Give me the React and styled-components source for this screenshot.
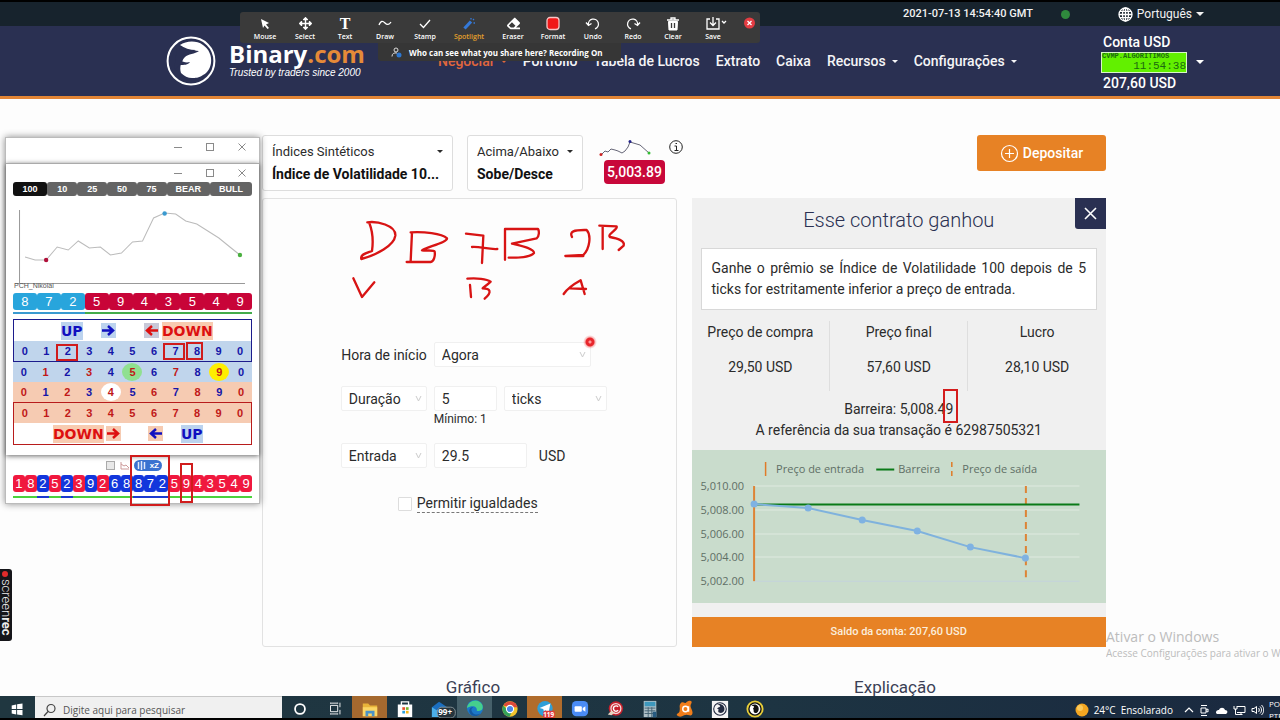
import React from "react";
import styled, { createGlobalStyle, css } from "styled-components";
import { FaArrowsAlt, FaEraser } from "react-icons/fa";

const GlobalStyle = createGlobalStyle`
  *, *::before, *::after { box-sizing: border-box; }
  body { margin: 0; background: #fff; color: #2b2b2b; font: 14px/20px Roboto, "Liberation Sans", sans-serif; }
  button, input, select { font: inherit; color: inherit; margin: 0; }
  a { color: inherit; text-decoration: none; }
`;

const ui = `"Open Sans", "Noto Sans", sans-serif`;

/* ---------- page shell ---------- */
const Desktop = styled.div`
  position: relative;
  display: flex;
  flex-direction: column;
  min-height: 100vh;
  overflow: hidden;
  border-top: 2px solid #000;
  background: #fdfdfd;
`;

const TopBar = styled.div`
  display: flex;
  align-items: center;
  justify-content: flex-end;
  height: 24px;
  padding-right: 76px;
  background: #17232d;
  color: #f2f2f2;
  font-size: 12px;
`;

const Clock = styled.time`
  font-size: 11px;
  font-weight: 500;
`;

const OnlineDot = styled.span`
  width: 9px;
  height: 9px;
  margin: 0 48px 0 28px;
  border-radius: 50%;
  background: #2f8a3d;
`;

const LanguageButton = styled.button`
  display: flex;
  align-items: center;
  gap: 4px;
  padding: 0;
  border: 0;
  background: none;
`;

const Caret = styled.span`
  display: inline-block;
  flex: none;
  border: ${(p) => p.$size || 4}px solid transparent;
  border-top-color: currentColor;
  border-bottom: 0;
`;

const Header = styled.header`
  display: flex;
  align-items: center;
  height: 73px;
  padding: 0 76px 0 166px;
  border-bottom: 3px solid #e38535;
  background: #2a3052;
  color: #fff;
`;

const Brand = styled.a`
  display: flex;
  align-items: center;
  gap: 13px;
  width: 200px;
`;

const BrandName = styled.strong`
  display: block;
  font: 700 24px/24px ${ui};
  span { color: #e58a38; }
`;

const Tagline = styled.em`
  display: block;
  font: italic 10px/14px "Liberation Sans", sans-serif;
  white-space: nowrap;
`;

const Nav = styled.nav`
  display: flex;
  gap: 16px;
  margin-left: 72px;
  white-space: nowrap;
`;

const NavLink = styled.a`
  display: flex;
  align-items: center;
  gap: 6px;
  font-weight: 500;
  color: ${(p) => (p.$active ? "#e0673c" : "#f5f5f7")};
`;

const Account = styled.div`
  display: flex;
  align-items: center;
  gap: 9px;
  margin-left: auto;
  padding-top: 2px;
  font-weight: 500;
`;

const AccountInfo = styled.div`
  width: 86px;
  div { padding-left: 2px; }
`;

const Lcd = styled.p`
  display: flex;
  flex-direction: column;
  height: 21px;
  margin: 0;
  border: 1px solid #d9f7c8;
  background: #62f000;
  color: #1b6a10;
  font: 700 7px/7px "Liberation Mono", monospace;
  span:last-child { align-self: flex-end; font-weight: 400; font-size: 11px; line-height: 12px; }
`;

/* ---------- main content ---------- */
const Main = styled.main`
  flex: 1;
  padding: 36px 174px 0 262px;
`;

const MarketBar = styled.div`
  display: flex;
  align-items: flex-start;
  height: 56px;
  margin-bottom: 7px;
`;

const MarketButton = styled.button`
  width: ${(p) => p.$width}px;
  height: 56px;
  margin-right: 14px;
  padding: 4px 9px;
  border: 1px solid #ddd;
  border-radius: 3px;
  background: #fff;
  text-align: left;
  line-height: 23px;
  white-space: nowrap;
`;

const MarketGroup = styled.span`
  display: flex;
  align-items: center;
  justify-content: space-between;
  font-size: 13px;
`;

const MarketName = styled.span`
  display: block;
  font-weight: 700;
  color: #111;
`;

const Quote = styled.div`
  display: flex;
  flex-direction: column;
  align-items: flex-end;
  gap: 3px;
  width: 68px;
  padding-top: 4px;
  svg { display: block; align-self: flex-start; margin-left: 2px; }
`;

const Price = styled.span`
  width: 61px;
  height: 24px;
  border-radius: 4px;
  background: #c8083a;
  color: #fff;
  font-weight: 500;
  line-height: 24px;
  text-align: center;
`;

const InfoLink = styled.a`
  width: 14px;
  height: 14px;
  margin: 5px 0 0 4px;
  svg { display: block; }
`;

const Deposit = styled.button`
  display: flex;
  align-items: center;
  justify-content: center;
  gap: 4px;
  width: 129px;
  height: 36px;
  margin-left: auto;
  border: 0;
  border-radius: 3px;
  background: #e78225;
  color: #fff;
  font-weight: 500;
`;

const Columns = styled.div`
  display: grid;
  grid-template-columns: 1fr 1fr;
  gap: 15px;
`;

const TradePanel = styled.form`
  padding: 143px 3px 0 0;
  border: 1px solid #e2e2e2;
  border-radius: 3px;
`;

const FormRow = styled.div`
  display: grid;
  grid-template-columns: 40% 1fr;
  align-items: center;
  column-gap: 7px;
  margin-bottom: ${(p) => p.$gap}px;
`;

const RowLabel = styled.div`
  display: flex;
  justify-content: flex-end;
`;

const RowFields = styled.div`
  display: flex;
  align-items: center;
  gap: 7px;
`;

const fieldBox = css`
  width: 100%;
  height: 25px;
  padding: 0 7px;
  border: 1px solid #f0f0f0;
  border-radius: 2px;
  background: #fff;
  outline: 0;
`;

const Select = styled.select`
  ${fieldBox}
  appearance: none;
`;

const Input = styled.input`
  ${fieldBox}
  width: ${(p) => p.$width}px;
`;

const SelectWrap = styled.span`
  position: relative;
  display: block;
  width: ${(p) => p.$width}px;
  svg { position: absolute; right: 5px; top: 9px; pointer-events: none; }
`;

const Hint = styled.small`
  display: block;
  grid-column: 2;
  font-size: 12px;
  line-height: 16px;
`;

const Currency = styled.span`
  padding-left: 5px;
`;

const Equal = styled.div`
  display: flex;
  align-items: center;
  justify-content: center;
  gap: 5px;
  input { appearance: none; width: 14px; height: 14px; border: 1px solid #ddd; border-radius: 1px; background: #fff; }
  label { border-bottom: 1px dashed #777; line-height: 17px; }
`;

const Contract = styled.section`
  display: flex;
  flex-direction: column;
  background: #f0f0f0;
`;

const ContractHead = styled.div`
  display: grid;
  grid-template-columns: 31px 1fr 31px;
  height: 50px;
`;

const ContractTitle = styled.h2`
  margin: 10px 0 0;
  grid-column: 2;
  font-weight: 300;
  font-size: 20px;
  line-height: 25px;
  text-align: center;
  color: #2a3052;
`;

const CloseButton = styled.button`
  display: grid;
  place-items: center;
  width: 31px;
  height: 31px;
  padding: 0;
  border: 0;
  border-radius: 0 0 0 3px;
  background: #2a3052;
`;

const Description = styled.p`
  margin: 0 9px 11px;
  padding: 9px 10px;
  border: 1px solid #d8d8d8;
  background: #fff;
  line-height: 21px;
  text-align: justify;
`;

const Prices = styled.table`
  width: 100%;
  border-collapse: collapse;
  table-layout: fixed;
  text-align: center;
  th, td { padding: 0; font-weight: 400; }
  th + th, td + td { border-left: 1px solid #dedede; }
  th { height: 22px; }
  td { height: 48px; }
`;

const ContractNotes = styled.div`
  padding: 8px 0 9px;
  line-height: 21px;
  text-align: center;
`;

const Marked = styled.span`
  position: relative;
  &::after {
    content: "";
    position: absolute;
    inset: -12px -5px -6px -2px;
    border: 2px solid #d41c1c;
  }
`;

const ContractChart = styled.svg`
  display: block;
  width: 100%;
  background: #c9dccc;
  text { font: 11px ${ui}; fill: #5f6f66; }
`;

const Balance = styled.div`
  margin-top: 14px;
  background: #e78225;
  color: #fbeedd;
  font-size: 11px;
  font-weight: 500;
  line-height: 30px;
  text-align: center;
`;

const Sections = styled.div`
  display: grid;
  grid-template-columns: 1fr 1fr;
  margin-top: 31px;
  h3 { margin: 0; font-weight: 400; font-size: 17px; line-height: 18px; text-align: center; color: #3b3f55; }
`;

/* ---------- indicator windows lying over the page ---------- */
const Windows = styled.aside`
  position: absolute;
  left: 5px;
  top: 135px;
  width: 255px;
  padding-top: 25px;
  border: 1px solid #bbb;
  background: #fff;
  box-shadow: 0 0 7px rgba(0, 0, 0, 0.45);
  font: 10px/12px "Liberation Sans", sans-serif;
`;

const InnerWindow = styled.section`
  padding: 0 7px 10px;
  border-top: 1px solid #aaa;
  background: #fff;
  box-shadow: 0 1px 5px rgba(0, 0, 0, 0.6);
`;

const WindowButtons = styled.div`
  display: flex;
  justify-content: flex-end;
  align-items: center;
  gap: 24px;
  height: 18px;
  padding-right: 6px;
  svg { display: block; }
`;

const OuterButtons = styled(WindowButtons)`
  position: absolute;
  top: 0;
  right: 7px;
`;

const Tabs = styled.div`
  display: grid;
  grid-template-columns: 34fr 30fr 30fr 29fr 30fr 43fr 42fr;
`;

const Tab = styled.button`
  height: 14px;
  padding: 0;
  border: 0;
  border-radius: 3px;
  background: ${(p) => (p.$active ? "#111" : "#646464")};
  color: #fff;
  font: 700 9px/14px "Liberation Sans", sans-serif;
`;

const MiniChart = styled.svg`
  display: block;
  width: 100%;
  height: 97px;
  text { font: 7px "Liberation Sans", sans-serif; fill: #555; }
`;

const Ticks = styled.ol`
  display: flex;
  margin: 0;
  padding: 0;
  list-style: none;
`;

const Tick = styled.li`
  flex: 1;
  color: #fff;
  font-size: 13px;
  line-height: 17px;
  text-align: center;
  span { display: block; border-radius: 3px; background: ${(p) => p.$color}; }
  &::after { content: ""; display: block; height: 2px; margin-top: ${(p) => p.$gap}px; background: ${(p) => p.$line}; }
`;

const Board = styled.div`
  margin-top: 5px;
`;

const BoardBox = styled.div`
  border: 1px solid ${(p) => p.$color};
`;

const Banner = styled.div`
  display: grid;
  grid-template-columns: ${(p) => p.$columns};
  justify-content: start;
  align-items: center;
  height: 21px;
  padding-left: ${(p) => p.$indent}px;
`;

const Word = styled.strong`
  background: ${(p) => (p.$up ? "#bcd3ee" : "#f8cbb0")};
  color: ${(p) => (p.$up ? "#1010c0" : "#dd1010")};
  font: 700 14px/18px "DejaVu Sans", sans-serif;
`;

const ArrowBox = styled.span`
  display: grid;
  place-items: center;
  height: 15px;
  background: ${(p) => p.$bg};
`;

const DigitTable = styled.table`
  width: 100%;
  border-collapse: collapse;
  table-layout: fixed;
`;

const DigitRow = styled.tr`
  background: ${(p) => p.$bg};
`;

const Digit = styled.td`
  height: 20px;
  padding: 0;
  color: ${(p) => (p.$red ? "#c01818" : "#1515a8")};
  font-weight: 700;
  font-size: 11px;
  text-align: center;
  span { display: block; width: 20px; margin: 0 auto; border-radius: 50%; line-height: 18px; background: ${(p) => p.$mark || "none"}; }
`;

const Controls = styled.div`
  display: flex;
  align-items: center;
  gap: 5px;
  height: 20px;
  padding-left: 100px;
  input { appearance: none; width: 9px; height: 9px; border: 1px solid #aaa; background: #e8e8e8; }
`;

const Toggle = styled.button`
  display: flex;
  align-items: center;
  justify-content: space-between;
  width: 28px;
  height: 11px;
  padding: 0 3px;
  border: 0;
  border-radius: 6px;
  background: #3a72d0;
  color: #fff;
  font: 700 8px/11px "Liberation Sans", sans-serif;
`;

const LongTicks = styled.div`
  padding: 0 7px 5px;
`;

/* ---------- annotations ---------- */
const Marker = styled.span`
  position: absolute;
  left: ${(p) => p.$x}px;
  top: ${(p) => p.$y}px;
  width: ${(p) => p.$w}px;
  height: ${(p) => p.$h}px;
  border: 2px solid #d01c1c;
`;

const Ink = styled.svg`
  position: absolute;
  left: 350px;
  top: 216px;
  width: 280px;
  height: 84px;
  pointer-events: none;
`;

const Spot = styled.span`
  position: absolute;
  left: 583px;
  top: 333px;
  width: 14px;
  height: 14px;
  border-radius: 50%;
  background: radial-gradient(circle, #ff9a9a 0 1px, #e8262c 2px 4px, rgba(240, 60, 60, 0.35) 5px, transparent 7px);
`;

const ShareTools = styled.div`
  position: absolute;
  left: 240px;
  top: 10px;
  width: 520px;
  color: #fff;
  font: 600 7px/9px ${ui};
`;

const ToolRow = styled.div`
  display: flex;
  height: 31px;
  padding-left: 5px;
  border-radius: 3px;
  background: #3a3a3a;
`;

const Tool = styled.button`
  display: flex;
  flex: none;
  flex-direction: column;
  align-items: center;
  gap: 1px;
  width: ${(p) => p.$width || 40}px;
  padding: 4px 0 0;
  border: 0;
  background: none;
  color: ${(p) => (p.$active ? "#e5a02c" : "#fff")};
  b { height: 15px; font: 700 16px/15px "Liberation Serif", serif; }
  svg { display: block; height: 15px; }
`;

const CloseTool = styled(Tool)`
  width: 32px;
  margin-right: -5px;
  padding-top: 3px;
`;

const ShareNote = styled.div`
  display: flex;
  align-items: center;
  gap: 7px;
  width: 243px;
  height: 18px;
  margin-left: 138px;
  padding-left: 13px;
  border-radius: 0 0 3px 3px;
  background: #363636;
  font-size: 8px;
  font-weight: 700;
  white-space: nowrap;
`;

const RecTag = styled.div`
  position: absolute;
  left: 0;
  top: 567px;
  width: 12px;
  height: 72px;
  padding-top: 2px;
  border-radius: 0 3px 3px 0;
  background: #16161a;
  color: #eee;
  writing-mode: vertical-rl;
  font: 300 13px/11px Roboto, sans-serif;
  white-space: nowrap;
  b { font-weight: 700; }
  &::before { content: ""; display: inline-block; width: 6px; height: 6px; margin: 0 3px 2px 0; border-radius: 50%; background: #e02b2b; }
`;

const Watermark = styled.div`
  position: absolute;
  right: 0;
  bottom: 60px;
  width: 174px;
  overflow: hidden;
  color: #bcbcbc;
  font: 10px/14px ${ui};
  white-space: nowrap;
  strong { display: block; font-weight: 400; font-size: 14px; line-height: 18px; }
`;

/* ---------- taskbar ---------- */
const Taskbar = styled.footer`
  position: relative;
  display: flex;
  height: 24px;
  border-bottom: 2px solid #000;
  background: linear-gradient(90deg, #203740, #1d3442 60%, #1a2940);
  color: #fff;
  font: 10px/22px ${ui};
  overflow: hidden;
`;

const TaskButton = styled.button`
  display: flex;
  flex: none;
  justify-content: center;
  width: 35px;
  padding: 4px 0 0;
  border: 0;
  background: ${(p) => p.$bg || "none"};
  svg { display: block; flex: none; width: 18px; height: 18px; overflow: visible; }
  text { font: 700 9px ${ui}; fill: #fff; }
`;

const Search = styled.label`
  display: flex;
  align-items: center;
  gap: 7px;
  flex: none;
  width: 247px;
  padding: 5px 0 0 8px;
  border-top: 1px solid #c8c8c8;
  background: #f0f0f0;
  input { flex: 1; min-width: 0; padding: 0; border: 0; background: none; outline: 0; line-height: 16px; }
  input::placeholder { color: #555; opacity: 1; }
`;

const Tray = styled.div`
  display: flex;
  align-items: center;
  gap: 5px;
  margin-left: auto;
  height: 22px;
  padding-top: 6px;
  white-space: nowrap;
  svg { display: block; flex: none; }
`;

const Locale = styled.span`
  width: 11px;
  overflow: hidden;
  font-size: 8px;
  line-height: 12px;
  white-space: normal;
`;

/* ---------- drawings ---------- */
const Eagle = ({ size }) => (
  <svg width={size} height={size} viewBox="0 0 50 50">
    <circle cx="25" cy="25" r="23.400" fill="#2a3052" stroke="#fff" strokeWidth="2" />
    <path d="M14 9C20 5 30 4 37 9c6 4 9 11 8 18-1 6-4 10-8 12-4 3-8 3-11 3-4 0-8-2-11-5-1-3-1-6 0-9l3-8 12-6c-6 0-12-2-16-5z" fill="#fff" />
    <path d="M11 12c7 3 15 2 22 3-4 3-11 3-14 6-2 2-3 4-4 7l-7 6z" fill="#2a3052" />
    <path d="M14 24c3 2 6 3 10 2-2 3-6 3-10 3z" fill="#2a3052" />
  </svg>
);

const VIcon = () => (
  <svg width="7" height="7" viewBox="0 0 7 7" fill="none" stroke="#ccc">
    <path d="M1 1l2.500 5L6 1" />
  </svg>
);

const WinIcons = () => (
  <>
    <svg width="8" height="8" stroke="#8a8a8a"><path d="M0 4.500h8" /></svg>
    <svg width="8" height="8" fill="none" stroke="#8a8a8a"><rect x=".5" y=".5" width="7" height="7" /></svg>
    <svg width="8" height="8" stroke="#8a8a8a"><path d="M.5.5l7 7M7.500 .5l-7 7" /></svg>
  </>
);

const Arrow = ({ left, color }) => (
  <svg width="13" height="11" viewBox="0 0 13 11" fill="none" stroke={color} strokeWidth="2.500">
    <path d={left ? "M13 5.500H2M7 1L2 5.500 7 10" : "M0 5.500h11M6 1l5 4.500L6 10"} />
  </svg>
);

const shape = { width: 16, height: 15, viewBox: "0 0 16 15", fill: "none", stroke: "#fff", strokeWidth: 1.3 };

const toolItems = [
  { name: "Mouse", icon: <svg {...shape}><path d="M4 3l8 4-3 1.500 3 3.500-1.500 1-3-3.500L6 12z" fill="#fff" stroke="none" /></svg> },
  { name: "Select", icon: <FaArrowsAlt size={13} /> },
  { name: "Text", icon: <b>T</b> },
  { name: "Draw", icon: <svg {...shape}><path d="M2 9c2-5 4-4 6-2s4 2 6-1" /></svg> },
  { name: "Stamp", icon: <svg {...shape}><path d="M3 8l3.500 3.500L13 4" /></svg> },
  {
    name: "Spotlight",
    width: 48,
    active: true,
    icon: <svg {...shape} stroke="#3479d8"><path d="M3.500 12.500l6.500-7" strokeWidth="3.200" /><path d="M10 2v1.500M13 3l-1 1M14 7h-1.500" /></svg>,
  },
  { name: "Eraser", icon: <FaEraser size={13} /> },
  { name: "Format", icon: <svg {...shape}><rect x="2" y="1.500" width="12" height="12" rx="3" fill="#f01818" stroke="#f6c5c5" /></svg> },
  { name: "Undo", icon: <svg {...shape}><path d="M3.500 9A5 5 0 1 1 10 12.800M1 6.500l2.500 3 3-2" /></svg> },
  { name: "Redo", icon: <svg {...shape}><path d="M12.500 9A5 5 0 1 0 6 12.800M15 6.500l-2.500 3-3-2" /></svg> },
  { name: "Clear", icon: <svg {...shape}><path d="M2 4h12M6 4V2h4v2" /><path d="M3.500 5.500h9L12 14H4z" fill="#fff" strokeWidth="1" /><path d="M6.500 7v5M9.500 7v5" stroke="#3a3a3a" /></svg> },
  { name: "Save", icon: <svg {...shape} width={28} viewBox="-6 0 28 15"><path d="M5 3H2v10h12V3h-3M8 1v8M5 6.500L8 9.500l3-3M17 5l2 2 2-2" /></svg> },
];

const navItems = [
  ["Negociar", true, true],
  ["Portfólio"],
  ["Tabela de Lucros"],
  ["Extrato"],
  ["Caixa"],
  ["Recursos", true],
  ["Configurações", true],
];

const chartPoints = [[62, 54], [116, 58], [170, 70], [225, 81], [278, 97], [333, 108]];
const chartLevels = [["5,010.00", 36], ["5,008.00", 60], ["5,006.00", 84], ["5,004.00", 107], ["5,002.00", 131]];
const lastTicks = [8, 7, 2, 5, 9, 4, 3, 5, 4, 9];
const longTicks = "18252392688725943549".split("");
const blueTicks = [2, 4, 6, 8, 9, 10, 11, 12];
const blueLines = [2, 4, 10, 11, 12];
const digits = [0, 1, 2, 3, 4, 5, 6, 7, 8, 9, 0];

const Digits = ({ bg, isRed, marks = {} }) => (
  <DigitRow $bg={bg}>
    {digits.map((d, i) => (
      <Digit key={i} $red={isRed(i)} $mark={marks[i]}><span>{d}</span></Digit>
    ))}
  </DigitRow>
);

const taskIcons = [
  { name: "Cortana", art: <circle cx="10" cy="10" r="5.500" fill="none" stroke="#fff" strokeWidth="2" /> },
  { name: "Visão de tarefas", art: <path d="M5 6h8v7H5zM5 4V3m8 1V3M5 16v-1m8 1v-1M5 3.500h8M5 15.500h8M15.500 3v5m0 3v5" fill="none" stroke="#fff" /> },
  { name: "Explorador", bg: "#a5692f", art: <><path d="M2 4h6l2 2h8v12H2z" fill="#e9b43a" /><path d="M2 8h16v10H2z" fill="#fbd665" /><path d="M5 18v-6h10v6h-3v-3H8v3z" fill="#4a92c8" /></> },
  { name: "Loja", art: <><path d="M6 6V2h8v4" fill="none" stroke="#fff" strokeWidth="1.500" /><path d="M2 5h16v14H2z" fill="#fff" /><path d="M7 8h3v3H7z" fill="#e8502c" /><path d="M11 8h3v3h-3z" fill="#7db52c" /><path d="M7 12h3v3H7z" fill="#2ba0e0" /><path d="M11 12h3v3h-3z" fill="#f3b71c" /></> },
  { name: "Email", art: <><path d="M1 8l8-6 9 6v11H1z" fill="#1b6fc0" /><path d="M1 8l8 5 9-5v11H1z" fill="#4bb0ea" /><rect x="7" y="8" width="20" height="12" rx="5" fill="#26343c" stroke="#8a979c" /><text x="8" y="17">99+</text></> },
  { name: "Edge", bg: "#46606a", art: <><circle cx="10" cy="9" r="9" fill="#1c78c8" /><path d="M1 9C2 1 13-3 18 5c2 5-1 8-6 7 1-5-5-7-11-3z" fill="#45cf8d" /><path d="M6 10c0 5 5 8 10 5-3 4-10 4-12-1-1-4 1-6 4-6z" fill="#1458a0" /></> },
  { name: "Chrome", art: <><circle cx="10" cy="10" r="8.500" fill="#f2c42e" /><path d="M2.600 6A8.500 8.500 0 0 1 18.300 8H10z" fill="#dd4a3a" /><path d="M2.600 6a8.500 8.500 0 0 0 7 12.500l2.500-6L8 12z" fill="#34a25a" /><circle cx="10" cy="10" r="4" fill="#4a86e8" stroke="#fff" strokeWidth="1.200" /></> },
  { name: "Telegram", bg: "#b06c2c", art: <><circle cx="10" cy="9.500" r="8.500" fill="#2f9fd8" /><path d="M4 9L16 4l-2 10-4-3-1 2-1-3z" fill="#fff" /><rect x="8" y="12" width="13" height="8" rx="2" fill="#e03a3a" /><text x="8" y="19" style={{ fontSize: 7 }}>119</text></> },
  { name: "Zoom", art: <><rect x="1" y="1" width="18" height="17" rx="5" fill="#4a8cf5" /><rect x="4" y="7" width="8" height="6" rx="1" fill="#fff" /><path d="M13 9l3-2v6l-3-2z" fill="#fff" /></> },
  { name: "CCleaner", art: <><circle cx="11" cy="9.500" r="8" fill="#c5202c" /><circle cx="11" cy="9.500" r="5.500" fill="none" stroke="#f5d5d5" strokeWidth="1.500" /><path d="M13.500 7.500a3 3 0 1 0 0 4" fill="none" stroke="#fff" strokeWidth="1.600" /><path d="M2 16l4-4 4 2-4 3z" fill="#e6d3c0" /></> },
  { name: "Calculadora", art: <><path d="M3 1h14v18H3z" fill="#aebfc6" /><path d="M4 2h12v5H4z" fill="#3d97bc" /><path d="M4 9h12M4 12h12M4 15h12M8 8v11M12 8v11" stroke="#426070" /><path d="M13 13h4v6h-4z" fill="#275a80" /></> },
  { name: "Avast", art: <><path d="M5 4c2-3 4 0 6-1 3-3 8-3 6 1-2 3 0 5 1 8s0 6-3 5-4-1-6 0c-3 2-6 2-8 0-1-2 3-2 3-5 1-3-1-5 1-8z" fill="#f07d1a" /><circle cx="10.500" cy="10" r="3" fill="none" stroke="#fff" strokeWidth="1.600" /><path d="M14 7v6" stroke="#fff" strokeWidth="1.500" /></> },
];

export default function App() {
  return (
    <Desktop>
      <GlobalStyle />
      <TopBar>
        <Clock>2021-07-13 14:54:40 GMT</Clock>
        <OnlineDot />
        <LanguageButton>
          <svg width="15" height="15" viewBox="0 0 15 15" fill="none" stroke="#fff" strokeWidth="1.300">
            <circle cx="7.500" cy="7.500" r="6.500" />
            <ellipse cx="7.500" cy="7.500" rx="3" ry="6.500" />
            <path d="M1 7.500h13M7.500 1v13M2 4.300h11M2 10.700h11" />
          </svg>
          Português
          <Caret />
        </LanguageButton>
      </TopBar>

      <Header>
        <Brand href="#home">
          <Eagle size={50} />
          <span>
            <BrandName>Binary<span>.com</span></BrandName>
            <Tagline>Trusted by traders since 2000</Tagline>
          </span>
        </Brand>
        <Nav>
          {navItems.map(([label, menu, active]) => (
            <NavLink key={label} href="#nav" $active={active}>
              {label}
              {menu && <Caret $size={3} />}
            </NavLink>
          ))}
        </Nav>
        <Account>
          <AccountInfo>
            <div>Conta USD</div>
            <Lcd><span>CVMP.ALGORITIMOS</span><span>11:54:38</span></Lcd>
            <div>207,60 USD</div>
          </AccountInfo>
          <Caret />
        </Account>
      </Header>

      <Main>
        <MarketBar>
          <MarketButton $width={191}>
            <MarketGroup>Índices Sintéticos <Caret $size={3} /></MarketGroup>
            <MarketName>Índice de Volatilidade 10...</MarketName>
          </MarketButton>
          <MarketButton $width={116}>
            <MarketGroup>Acima/Abaixo <Caret $size={3} /></MarketGroup>
            <MarketName>Sobe/Desce</MarketName>
          </MarketButton>
          <Quote>
            <svg width="52" height="18" viewBox="0 0 52 18" fill="none">
              <path d="M2 16l4-4 3 1 3-3 4 1 3 1 4 2 3-2 3-4 2-5 10 3 9 8" stroke="#667" />
              <circle cx="2" cy="15.500" r="1.500" fill="#c22" />
              <circle cx="31" cy="2.500" r="1.500" fill="#228" />
              <circle cx="50" cy="14" r="1.500" fill="#3b3" />
            </svg>
            <Price>5,003.89</Price>
          </Quote>
          <InfoLink href="#info" aria-label="Informações">
            <svg width="14" height="14" fill="none" stroke="#222">
              <circle cx="7" cy="7" r="6.300" />
              <path d="M5.500 6h2v4.500M5.500 10.500h4M6.500 3.500h1.500" />
            </svg>
          </InfoLink>
          <Deposit>
            <svg width="19" height="19" fill="none" stroke="#fff" strokeWidth="1.200">
              <circle cx="9.500" cy="9.500" r="8" />
              <path d="M5 9.500h9M9.500 5v9" />
            </svg>
            Depositar
          </Deposit>
        </MarketBar>

        <Columns>
          <TradePanel>
            <FormRow $gap={19}>
              <RowLabel><label htmlFor="start">Hora de início</label></RowLabel>
              <RowFields>
                <SelectWrap $width={157}>
                  <Select id="start"><option>Agora</option></Select>
                  <VIcon />
                </SelectWrap>
              </RowFields>
            </FormRow>
            <FormRow $gap={16}>
              <RowLabel>
                <SelectWrap $width={86}>
                  <Select aria-label="Tipo de prazo"><option>Duração</option></Select>
                  <VIcon />
                </SelectWrap>
              </RowLabel>
              <RowFields>
                <Input $width={63} aria-label="Duração" defaultValue="5" />
                <SelectWrap $width={103}>
                  <Select aria-label="Unidade"><option>ticks</option></Select>
                  <VIcon />
                </SelectWrap>
              </RowFields>
              <Hint>Mínimo: 1</Hint>
            </FormRow>
            <FormRow $gap={27}>
              <RowLabel>
                <SelectWrap $width={86}>
                  <Select aria-label="Tipo de valor"><option>Entrada</option></Select>
                  <VIcon />
                </SelectWrap>
              </RowLabel>
              <RowFields>
                <Input $width={93} aria-label="Valor" defaultValue="29.5" />
                <Currency>USD</Currency>
              </RowFields>
            </FormRow>
            <Equal>
              <input type="checkbox" id="equal" />
              <label htmlFor="equal">Permitir igualdades</label>
            </Equal>
          </TradePanel>

          <Contract>
            <ContractHead>
              <ContractTitle>Esse contrato ganhou</ContractTitle>
              <CloseButton aria-label="Fechar">
                <svg width="13" height="13" stroke="#fff" strokeWidth="1.600"><path d="M1 1l11 11M12 1L1 12" /></svg>
              </CloseButton>
            </ContractHead>
            <Description>
              Ganhe o prêmio se Índice de Volatilidade 100 depois de 5 ticks for estritamente inferior a preço de entrada.
            </Description>
            <Prices>
              <thead>
                <tr><th>Preço de compra</th><th>Preço final</th><th>Lucro</th></tr>
              </thead>
              <tbody>
                <tr><td>29,50 USD</td><td>57,60 USD</td><td>28,10 USD</td></tr>
              </tbody>
            </Prices>
            <ContractNotes>
              <div>Barreira: 5,008.4<Marked>9</Marked></div>
              <div>A referência da sua transação é 62987505321</div>
            </ContractNotes>
            <ContractChart viewBox="0 0 414 153">
              {chartLevels.map(([label, y]) => (
                <React.Fragment key={label}>
                  <path d={`M62 ${y}H387`} stroke={y > 130 ? "#c3d3dc" : "#dfe9e0"} />
                  <text x="52" y={y + 4} textAnchor="end">{label}</text>
                </React.Fragment>
              ))}
              <path d="M73.500 12v14" stroke="#e07b28" strokeWidth="1.500" />
              <text x="84" y="23">Preço de entrada</text>
              <path d="M184 19.500h18" stroke="#0a7a18" strokeWidth="2" />
              <text x="206" y="23">Barreira</text>
              <path d="M259.500 12v14" stroke="#e07b28" strokeWidth="1.500" strokeDasharray="5 4" />
              <text x="270" y="23">Preço de saída</text>
              <path d="M62 36v95" stroke="#dd8436" strokeWidth="2" />
              <path d="M333.500 36v95" stroke="#dd8436" strokeWidth="2" strokeDasharray="7 5" />
              <path d="M62 54.500h325" stroke="#0a7a18" strokeWidth="2" />
              <polyline points={chartPoints.join(" ")} fill="none" stroke="#7fb2dd" strokeWidth="2" />
              {chartPoints.map(([x, y]) => <circle key={x} cx={x} cy={y} r="3.500" fill="#7fb2e2" />)}
            </ContractChart>
            <Balance>Saldo da conta: 207,60 USD</Balance>
          </Contract>
        </Columns>

        <Sections>
          <h3>Gráfico</h3>
          <h3>Explicação</h3>
        </Sections>
      </Main>

      <Taskbar>
        <TaskButton aria-label="Iniciar">
          <svg viewBox="0 0 20 20"><path d="M3 6l5-1v5H3zM9 4.800L15 4v6H9zM3 11h5v5l-5-1zM9 11h6v6l-6-1z" fill="#fff" /></svg>
        </TaskButton>
        <Search>
          <svg width="13" height="14" fill="none" stroke="#444" strokeWidth="1.200">
            <circle cx="8" cy="5.500" r="4" />
            <path d="M5 8.500L1 13" />
          </svg>
          <input type="text" placeholder="Digite aqui para pesquisar" />
        </Search>
        {taskIcons.map((t) => (
          <TaskButton key={t.name} aria-label={t.name} $bg={t.bg}>
            <svg viewBox="0 0 20 20">{t.art}</svg>
          </TaskButton>
        ))}
        <TaskButton aria-label="Binary">
          <svg viewBox="0 0 20 20"><path d="M1 1h18v19H1z" fill="#f4f4f4" /><circle cx="10" cy="10" r="7" fill="none" stroke="#222a40" strokeWidth="1.200" /><path d="M6 5c5-2 9 1 9 5s-4 5-6 4 0-4-1-4-2-1 1-2 0-3-3-3z" fill="#222a40" /></svg>
        </TaskButton>
        <TaskButton aria-label="Binary Bot">
          <svg viewBox="0 0 20 20"><circle cx="10" cy="10" r="8.500" fill="#111" stroke="#e8cf3a" strokeWidth="2" /><circle cx="10" cy="10" r="6" fill="#fff" /><path d="M6 6c5-3 9 1 8 5s-4 4-5 3 0-3-1-4 4-3-2-4z" fill="#111" /></svg>
        </TaskButton>
        <Tray>
          <svg width="14" height="14"><circle cx="7" cy="7" r="6.500" fill="#f4a722" /><circle cx="5" cy="5" r="3" fill="#fbc95a" /></svg>
          <span>24°C</span>
          <span>Ensolarado</span>
          <svg width="16" height="12" fill="none" stroke="#fff" strokeWidth="1.200"><path d="M7 8l4-4 4 4" /></svg>
          <svg width="11" height="12" fill="none" stroke="#fff"><path d="M2 4h5v5H2zM7 6l2-1v3L7 7M2 1.500h6M2 11.500h6" /></svg>
          <svg width="13" height="12"><path d="M1 9c0-3 2-3 3-3 1-3 5-3 6 0 3 0 3 3 1 4H2z" fill="#fff" /></svg>
          <svg width="13" height="12" fill="none" stroke="#fff"><path d="M4 2.500h8v6H4M1 2v3h3V2M2.500 5v5.500h7M8 8.500v2" /></svg>
          <svg width="13" height="12" fill="none" stroke="#fff"><path d="M1 4.500h2l2.500-2v7L3 7.500H1zM7.500 4c1 1 1 3 0 4M9 2.500c2 2 2 5 0 7M10.500 1c3 3 3 7 0 10" /></svg>
          <Locale>POR PTB</Locale>
        </Tray>
      </Taskbar>

      <Windows>
        <OuterButtons><WinIcons /></OuterButtons>
        <InnerWindow>
          <WindowButtons><WinIcons /></WindowButtons>
          <Tabs>
            {["100", "10", "25", "50", "75", "BEAR", "BULL"].map((t, i) => (
              <Tab key={t} $active={i === 0}>{t}</Tab>
            ))}
          </Tabs>
          <MiniChart viewBox="13 196 238 97" preserveAspectRatio="none">
            <path d="M19.500 210v74M15 283.500h229" stroke="#999" />
            <polyline
              points="25,257 35,260 46,260 57,247 68,250 78,241 89,248 100,247 110,255 121,253 132,242 142,241 153,218 164,213 175,214 185,221 196,224 207,231 218,238 229,247 239,255"
              fill="none"
              stroke="#bbb"
            />
            <circle cx="46" cy="260" r="2.200" fill="#b0103a" />
            <circle cx="164" cy="213.500" r="2.200" fill="#3a9ad0" />
            <circle cx="239" cy="255" r="2.200" fill="#4ab040" />
            <text x="14" y="288">PCH_Nikolai</text>
          </MiniChart>
          <Ticks>
            {lastTicks.map((d, i) => (
              <Tick key={i} $gap={2} $color={i < 3 ? "#28a5dc" : "#c80438"} $line={i < 3 ? "#3a9ad0" : "#43ab4b"}>
                <span>{d}</span>
              </Tick>
            ))}
          </Ticks>
          <Board>
            <BoardBox $color="#1c1c8c">
              <Banner $columns="22px 18px 15px 28px 15px 3px 51px" $indent={47}>
                <Word $up>UP</Word><i />
                <ArrowBox $bg="#bcd3ee"><Arrow color="#1010c0" /></ArrowBox><i />
                <ArrowBox $bg="#c8c8d8"><Arrow left color="#dd1010" /></ArrowBox><i />
                <Word>DOWN</Word>
              </Banner>
              <DigitTable><tbody><Digits bg="#c0d5ec" isRed={() => false} /></tbody></DigitTable>
            </BoardBox>
            <DigitTable>
              <tbody>
                <Digits bg="#c0d5ec" isRed={(i) => i % 2 === 1} marks={{ 5: "#90e090", 9: "#ffee00" }} />
                <Digits bg="#f6cbb2" isRed={(i) => i % 2 === 0} marks={{ 4: "#fff" }} />
              </tbody>
            </DigitTable>
            <BoardBox $color="#b81c1c">
              <DigitTable><tbody><Digits bg="#f6cbb2" isRed={() => true} /></tbody></DigitTable>
              <Banner $columns="51px 2px 15px 27px 15px 18px 22px" $indent={39}>
                <Word>DOWN</Word><i />
                <ArrowBox $bg="#f6cbb2"><Arrow color="#dd1010" /></ArrowBox><i />
                <ArrowBox $bg="#f6cbb2"><Arrow left color="#1010c0" /></ArrowBox><i />
                <Word $up>UP</Word>
              </Banner>
            </BoardBox>
          </Board>
        </InnerWindow>
        <Controls>
          <input type="checkbox" aria-label="Ativar sequência" />
          <svg width="9" height="9" fill="none" stroke="#c99"><path d="M1 1v7h8M1 3l3 2 2-1 3 3" /></svg>
          <Toggle>
            <svg width="9" height="9" stroke="#dfe8fa" strokeWidth="1.500"><path d="M1.500 1v7M4.500 0v9M7.500 1v7" /></svg>
            xZ
          </Toggle>
        </Controls>
        <LongTicks>
          <Ticks>
            {longTicks.map((d, i) => (
              <Tick
                key={i}
                $gap={4}
                $color={blueTicks.includes(i) ? "#1236dc" : "#f0183e"}
                $line={blueLines.includes(i) ? "#1a3ad0" : "#4bd13c"}
              >
                <span>{d}</span>
              </Tick>
            ))}
          </Ticks>
        </LongTicks>
      </Windows>

      <Marker $x={56} $y={342} $w={22} $h={17} />
      <Marker $x={163} $y={341} $w={22} $h={17} />
      <Marker $x={186} $y={340} $w={17} $h={18} />
      <Marker $x={130} $y={453} $w={40} $h={51} />
      <Marker $x={180} $y={461} $w={13} $h={40} />

      <Ink viewBox="270 279 840 252" fill="none" stroke="#d81414" strokeWidth="7" strokeLinecap="round" strokeLinejoin="round">
        <path d="M322 292C350 288 408 300 406 332C402 362 350 390 304 402C300 388 320 384 336 378C340 350 338 320 328 294" />
        <path d="M456 322L452 408M452 322C490 320 545 324 561 340C562 352 500 366 486 376C500 378 522 374 524 380C526 392 522 410 512 411L440 411" />
        <path d="M618 326L670 332L666 414M636 366C660 364 685 374 712 372" />
        <path d="M735 312L735 404M735 312L834 312C838 318 838 334 830 340L756 356C780 362 822 370 822 384C815 392 790 399 746 398" />
        <path d="M936 336C928 320 940 314 980 315C994 330 990 370 970 390L916 393L970 393" />
        <path d="M1018 302L1070 304C1076 312 1040 328 1050 336C1070 340 1096 346 1091 362L1076 375M1028 304L1028 372" />
        <path d="M280 460L306 516L343 472" />
        <path d="M622 461C650 458 680 462 692 470C680 482 670 486 668 490C690 490 698 500 674 521M630 480L633 516" />
        <path d="M911 507C920 494 944 476 962 466L974 507M930 490L978 492" />
      </Ink>
      <Spot />

      <ShareTools>
        <ToolRow>
          {toolItems.map((t) => (
            <Tool key={t.name} $width={t.width} $active={t.active}>
              {t.icon}
              {t.name}
            </Tool>
          ))}
          <CloseTool aria-label="Fechar barra">
            <svg width="13" height="15" viewBox="0 0 13 15">
              <circle cx="6.500" cy="8" r="5.500" fill="#e33c42" />
              <path d="M4.500 6l4 4M8.500 6l-4 4" stroke="#fff" strokeWidth="1.300" />
            </svg>
          </CloseTool>
        </ToolRow>
        <ShareNote>
          <svg width="11" height="11" fill="none" stroke="#ddd">
            <circle cx="5" cy="3" r="2" />
            <path d="M1 9.500c0-3 2-4 5-3.500" />
            <circle cx="8" cy="8" r="2.500" fill="#2d77d0" stroke="none" />
          </svg>
          Who can see what you share here? Recording On
        </ShareNote>
      </ShareTools>

      <RecTag>screen<b>rec</b></RecTag>
      <Watermark>
        <strong>Ativar o Windows</strong>
        Acesse Configurações para ativar o Windows.
      </Watermark>
    </Desktop>
  );
}
